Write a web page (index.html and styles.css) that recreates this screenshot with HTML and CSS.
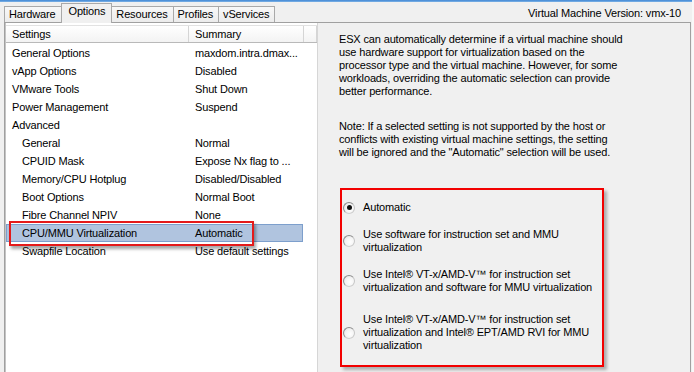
FILE: index.html
```html
<!DOCTYPE html>
<html>
<head>
<meta charset="utf-8">
<link rel="stylesheet" href="styles.css">
</head>
<body>
<div class="window">
  <div class="topline"></div>
  <div class="tabbar">
    <div class="tabs">
      <div class="tab">Hardware</div>
      <div class="tab active">Options</div>
      <div class="tab">Resources</div>
      <div class="tab">Profiles</div>
      <div class="tab">vServices</div>
    </div>
    <div class="version">Virtual Machine Version: vmx-10</div>
  </div>
  <div class="panel">
    <div class="list">
      <div class="list-head">
        <div class="hcell c-name">Settings</div>
        <div class="hcell c-sum">Summary</div>
        <div class="hcell c-extra"></div>
      </div>
      <div class="rows">
        <div class="row"><span class="c-name">General Options</span><span class="c-sum">maxdom.intra.dmax...</span></div>
        <div class="row"><span class="c-name">vApp Options</span><span class="c-sum">Disabled</span></div>
        <div class="row"><span class="c-name">VMware Tools</span><span class="c-sum">Shut Down</span></div>
        <div class="row"><span class="c-name">Power Management</span><span class="c-sum">Suspend</span></div>
        <div class="row"><span class="c-name">Advanced</span><span class="c-sum"></span></div>
        <div class="row sub"><span class="c-name">General</span><span class="c-sum">Normal</span></div>
        <div class="row sub"><span class="c-name">CPUID Mask</span><span class="c-sum">Expose Nx flag to ...</span></div>
        <div class="row sub"><span class="c-name">Memory/CPU Hotplug</span><span class="c-sum">Disabled/Disabled</span></div>
        <div class="row sub"><span class="c-name">Boot Options</span><span class="c-sum">Normal Boot</span></div>
        <div class="row sub"><span class="c-name">Fibre Channel NPIV</span><span class="c-sum">None</span></div>
        <div class="row sub selected"><span class="c-name">CPU/MMU Virtualization</span><span class="c-sum">Automatic</span><span class="callout"></span></div>
        <div class="row sub"><span class="c-name">Swapfile Location</span><span class="c-sum">Use default settings</span></div>
      </div>
    </div>
    <div class="detail">
      <p class="desc">ESX can automatically determine if a virtual machine should<br>use hardware support for virtualization based on the<br>processor type and the virtual machine. However, for some<br>workloads, overriding the automatic selection can provide<br>better performance.</p>
      <p class="note">Note: If a selected setting is not supported by the host or<br>conflicts with existing virtual machine settings, the setting<br>will be ignored and the "Automatic" selection will be used.</p>
      <div class="choices">
        <div class="choice"><span class="radio checked"></span><span class="label">Automatic</span></div>
        <div class="choice"><span class="radio"></span><span class="label">Use software for instruction set and MMU<br>virtualization</span></div>
        <div class="choice"><span class="radio"></span><span class="label">Use Intel® VT-x/AMD-V™ for instruction set<br>virtualization and software for MMU virtualization</span></div>
        <div class="choice last"><span class="radio"></span><span class="label">Use Intel® VT-x/AMD-V™ for instruction set<br>virtualization and Intel® EPT/AMD RVI for MMU<br>virtualization</span></div>
      </div>
    </div>
  </div>
</div>
</body>
</html>
```

FILE: styles.css
```css
html, body {
  margin: 0;
  padding: 0;
}
body {
  background: #f8f8f8;
  font-family: "Liberation Sans", Tahoma, Arial, sans-serif;
  font-size: 11px;
  letter-spacing: -0.15px;
  color: #000;
}
.window {
  width: 692px;
  height: 372px;
  background: #f0f0f0;
  overflow: hidden;
}
.topline {
  height: 2px;
  background: linear-gradient(#3f86d4, #7fb3e6);
}
.tabbar {
  height: 20px;
  display: flex;
  justify-content: space-between;
  align-items: flex-end;
  padding-left: 4px;
}
.tabs {
  display: flex;
  align-items: flex-end;
  height: 20px;
}
.tab {
  height: 15px;
  line-height: 15px;
  padding: 0 5px 0 4px;
  border: 1px solid #a9a9a9;
  border-bottom: none;
  background: linear-gradient(#f8f8f8, #ececec);
  margin-right: -1px;
}
.tab.active {
  height: 19px;
  line-height: 15px;
  padding: 0 6px 0 7px;
  background: #f0f0f0;
  position: relative;
  z-index: 2;
  margin-bottom: -1px;
}
.version {
  align-self: center;
  padding-right: 11px;
  padding-top: 1px;
}
.panel {
  display: flex;
  width: 687px;
  height: 350px;
  margin-left: 4px;
  box-sizing: border-box;
  border: 1px solid #a0a0a0;
  border-bottom: none;
  position: relative;
  z-index: 1;
}
.list {
  width: 313px;
  box-sizing: border-box;
  background: #fff;
  border-left: 1px solid #c4c4c4;
  border-right: 1px solid #d6d6d6;
}
.list-head {
  display: flex;
  height: 18px;
  margin-top: 2px;
  box-sizing: border-box;
  border-top: 1px solid #e2e2e2;
  border-bottom: 1px solid #b9b9b9;
  background: linear-gradient(#ffffff, #f3f3f3);
}
.hcell {
  box-sizing: border-box;
  line-height: 16px;
  padding-left: 6px;
  border-right: 1px solid #d5d5d5;
}
.hcell.c-name { width: 183px; }
.hcell.c-sum { width: 115px; }
.hcell.c-extra { width: 13px; }
.rows {
  padding-top: 1px;
}
.row {
  display: flex;
  height: 18px;
  line-height: 18px;
  width: 297px;
  position: relative;
  white-space: nowrap;
}
.row .c-name {
  width: 183px;
  box-sizing: border-box;
  padding-left: 6px;
}
.row.sub .c-name {
  padding-left: 16px;
}
.row .c-sum {
  padding-left: 6px;
}
.row.selected {
  background: #b0c4df;
  box-shadow: inset 0 0 0 1px #7d9fcc;
}
.callout {
  position: absolute;
  left: 3px;
  top: -3px;
  width: 245px;
  height: 25px;
  box-sizing: border-box;
  border: 2px solid #e41a1a;
  box-shadow: 2px 3px 3px rgba(0, 0, 0, 0.35);
}
.detail {
  flex: 1;
  padding: 10px 0 0 21px;
}
.detail p {
  margin: 0;
  line-height: 13px;
  white-space: nowrap;
}
.note {
  margin-top: 22px !important;
}
.choices {
  margin-top: 29px;
  margin-left: 1px;
  width: 264px;
  height: 179px;
  box-sizing: border-box;
  border: 2px solid #f20000;
  box-shadow: 3px 3px 3px rgba(0, 0, 0, 0.28);
  padding: 11px 0 0 1px;
}
.choice {
  display: flex;
  align-items: center;
  gap: 8px;
  line-height: 13px;
  white-space: nowrap;
  margin-top: 14px;
}
.choice:first-child {
  margin-top: 0;
}
.choice.last {
  margin-top: 19px;
}
.radio {
  width: 12px;
  height: 12px;
  flex: none;
  border-radius: 50%;
  box-sizing: border-box;
  border: 1px solid #8c8c8c;
  border-right-color: #c6c6c6;
  border-bottom-color: #d0d0d0;
  background: radial-gradient(circle at 60% 60%, #ffffff 0%, #f4f4f4 50%, #d8d8d8 100%);
  position: relative;
}
.radio.checked::after {
  content: "";
  position: absolute;
  left: 2.5px;
  top: 2.5px;
  width: 5px;
  height: 5px;
  border-radius: 50%;
  background: #111;
}
```
